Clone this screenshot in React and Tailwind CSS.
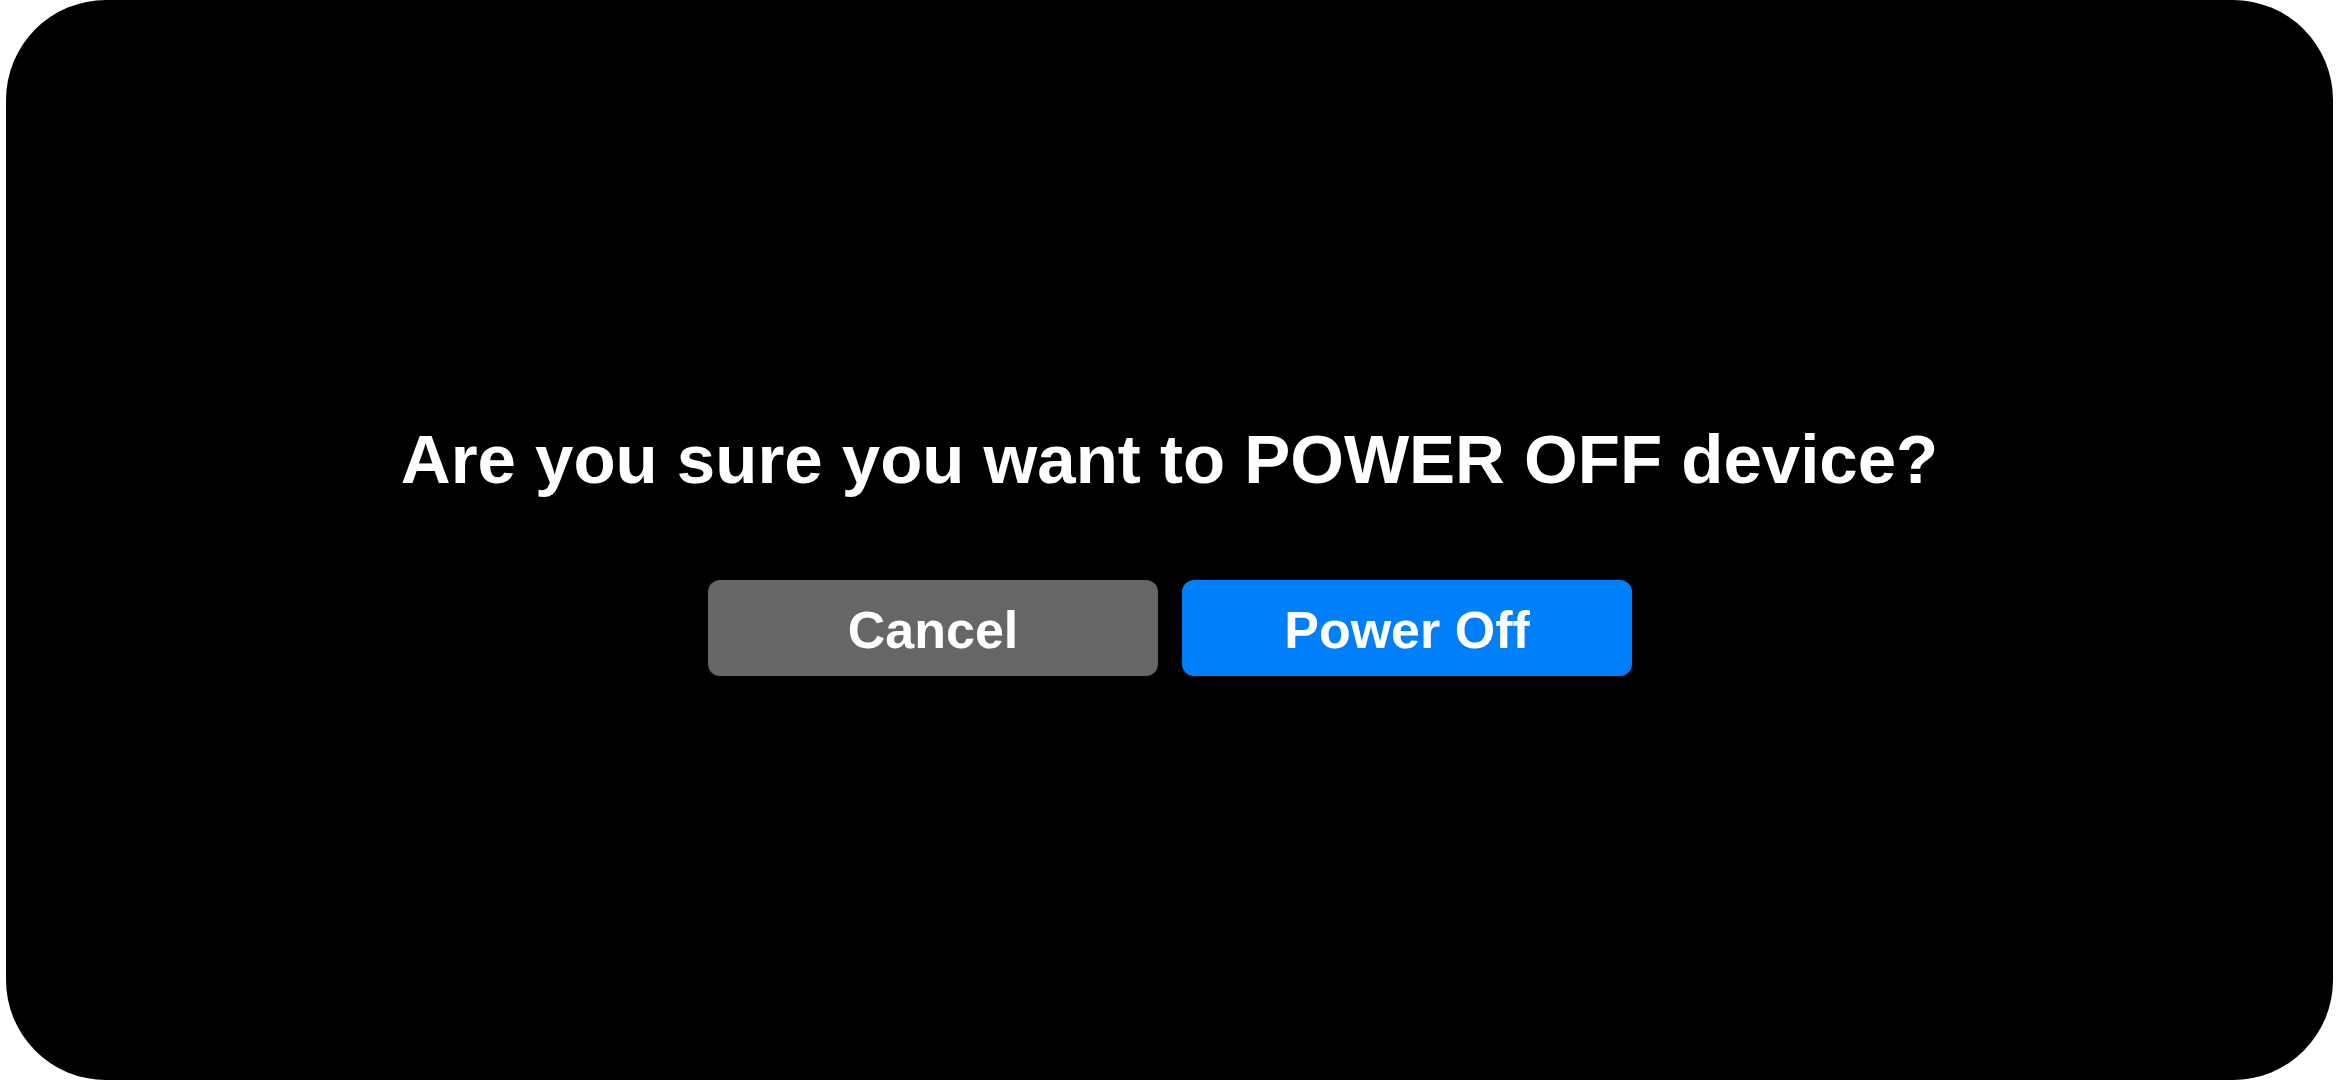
export default function App() {
  return (
    <div className="w-[2340px] h-[1080px] bg-white flex">
      <div className="ml-[6px] w-[2327px] h-[1080px] bg-black rounded-[100px] flex flex-col items-center pt-[425px] font-['Liberation_Sans',Arial,sans-serif]">
        <h1 className="text-white font-bold text-[69px] leading-[69px] whitespace-nowrap">
          Are you sure you want to POWER OFF device?
        </h1>
        <div className="flex gap-[24px] mt-[86px] ml-[1px]">
          <button className="w-[450px] h-[96px] rounded-[12px] bg-[#666666] text-white font-bold text-[52px] leading-none flex items-center justify-center pt-[3px]">
            Cancel
          </button>
          <button className="w-[450px] h-[96px] rounded-[12px] bg-[#007FFA] text-white font-bold text-[52px] leading-none flex items-center justify-center pt-[3px]">
            Power Off
          </button>
        </div>
      </div>
    </div>
  );
}
